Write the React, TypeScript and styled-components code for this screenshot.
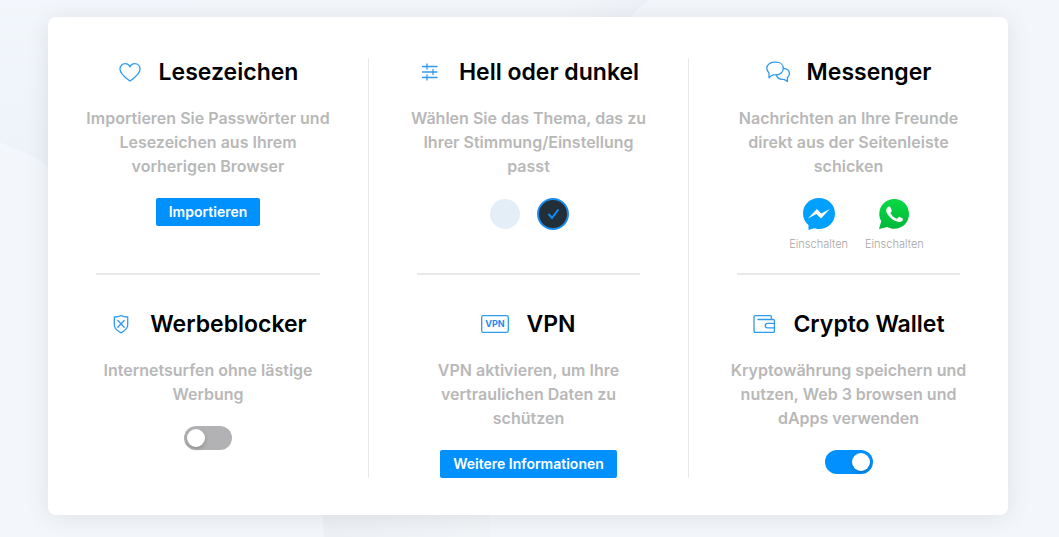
import React from "react";
import styled, { createGlobalStyle } from "styled-components";

const GlobalStyle = createGlobalStyle`
  * { box-sizing: border-box; }
  body {
    margin: 0;
    background: #f3f7fb;
    font-family: Inter, "Liberation Sans", sans-serif;
    color: #000;
  }
`;

const Page = styled.main`
  position: relative;
  min-height: 100vh;
  padding: 17px 51px 22px 48px;
  overflow: hidden;
`;

const Backdrop = styled.svg`
  position: absolute;
  inset: 0;
  width: 100%;
  height: 100%;
`;

const Card = styled.section`
  position: relative;
  display: grid;
  grid-template-columns: repeat(3, 1fr);
  max-width: 960px;
  margin: 0 auto;
  padding: 41px 0 37px;
  border-radius: 8px;
  background: #fff;
  box-shadow: 0 2px 24px rgba(0, 0, 0, 0.09);
`;

const Column = styled.div`
  display: flex;
  flex-direction: column;
  & + & { border-left: 1px solid #e9e9e9; }
`;

const Feature = styled.article`
  display: flex;
  flex-direction: column;
  align-items: center;
  gap: 20px;
  min-height: 168px;
`;

const Divider = styled.hr`
  width: calc(100% - 96px);
  height: 2px;
  margin: 0 auto 35px;
  border: 0;
  background: #e9e9e9;
`;

const Upper = styled.div`
  min-height: 215px;
`;

const Title = styled.h2`
  display: flex;
  align-items: center;
  gap: 17px;
  margin: 0;
  font-size: 23px;
  line-height: 28px;
  font-weight: 600;
  white-space: nowrap;
`;

const Icon = styled.svg`
  flex: none;
  fill: none;
  stroke: #2f9bf0;
  stroke-width: 1.3;
  stroke-linecap: round;
  stroke-linejoin: round;
`;

const IconText = styled.text`
  fill: #1a8cf0;
  stroke: none;
  font-size: 9px;
  font-weight: 700;
  text-anchor: middle;
`;

const Description = styled.p`
  margin: 0;
  color: #b8b8b8;
  font-size: 16px;
  line-height: 24px;
  font-weight: 600;
  text-align: center;
  white-space: pre-line;
`;

const Button = styled.button`
  height: 28px;
  padding: 0 13px;
  border: 0;
  border-radius: 2px;
  background: #0091ff;
  color: #fff;
  font: 600 14px/28px Inter, "Liberation Sans", sans-serif;
  cursor: pointer;
`;

const Themes = styled.div`
  display: flex;
  gap: 16px;
`;

const ThemeChoice = styled.label`
  position: relative;
  display: grid;
  place-items: center;
  width: 32px;
  height: 32px;
`;

const ThemeRadio = styled.input<{ $color: string }>`
  appearance: none;
  width: 30px;
  height: 30px;
  margin: 0;
  border-radius: 50%;
  background: ${(p) => p.$color};
  cursor: pointer;
  &:checked { width: 32px; height: 32px; border: 2px solid #1a8cf0; }
  & + svg { display: none; }
  &:checked + svg { display: block; }
`;

const Check = styled.svg`
  position: absolute;
  inset: 0;
  fill: none;
  stroke: #0d8cf5;
  stroke-width: 2;
  stroke-linecap: round;
  pointer-events: none;
`;

const Messengers = styled.div`
  display: flex;
  gap: 17px;
  padding-left: 16px;
`;

const Messenger = styled.button`
  display: flex;
  flex-direction: column;
  align-items: center;
  gap: 6px;
  padding: 0;
  border: 0;
  background: none;
  color: #a6a6a6;
  font: 300 11px/16px Inter, "Liberation Sans", sans-serif;
  cursor: pointer;
`;

const Switch = styled.input`
  appearance: none;
  display: flex;
  align-items: center;
  width: 48px;
  height: 24px;
  margin: 0;
  padding: 0 3px;
  border-radius: 12px;
  background: #b2b2b4;
  cursor: pointer;
  &::before {
    content: "";
    width: 18px;
    height: 18px;
    border-radius: 50%;
    background: #fff;
    box-shadow: 0 2px 4px rgba(0, 0, 0, 0.2);
  }
  &:checked { justify-content: flex-end; background: #0091ff; }
`;

const HeartIcon = () => (
  <Icon width="24" height="24" viewBox="0 0 24 24" aria-hidden="true">
    <path d="M12 21C8 18 2 14 2 9.2C2 6 4.200 3.600 7.200 3.600C9.500 3.600 11.200 4.900 12 6.900C12.800 4.900 14.500 3.600 16.800 3.600C19.800 3.600 22 6 22 9.200C22 14 16 18 12 21Z" />
  </Icon>
);

const SlidersIcon = () => (
  <Icon width="24" height="24" viewBox="0 0 24 24" aria-hidden="true">
    <path d="M4.500 6.500H19M4.500 12H19M4.500 17.500H19M9 4V9M15 9.500V14.500M9 15V20" />
  </Icon>
);

const ChatIcon = () => (
  <Icon width="24" height="24" viewBox="0 0 24 24" aria-hidden="true">
    <path d="M3 17.800V12.900C1.500 11.600 .8 10 .8 8.300C.8 4.700 4 2.200 8.300 2.200H10C14.300 2.200 17.300 4.700 17.300 8.300C17.300 12 14.200 14.900 10 14.900H7.200C6 15.200 4.600 16.300 3 17.800Z" />
    <path d="M17.300 8.300C21 8.500 23.400 10.700 23.400 13.500C23.400 15.200 22.600 16.600 21.400 17.600V21.500C20 20.400 19 19.500 17.500 19.300H16C13.500 19.300 11.800 18 11 16.600L10.600 15" />
  </Icon>
);

const ShieldIcon = () => (
  <Icon width="24" height="24" viewBox="0 0 24 24" aria-hidden="true">
    <path d="M12 3.500C14 4.800 16.500 5 18.700 5V13C18.700 17 15.500 19 12 20.800C8.500 19 5.300 17 5.300 13V5C7.500 5 10 4.800 12 3.500Z" />
    <path d="M8.800 8.500L15.200 15.200M15.200 8.500L8.800 15.200" />
  </Icon>
);

const VpnIcon = () => (
  <Icon width="28" height="20" viewBox="0 0 28 20" aria-hidden="true">
    <rect x="0.700" y="1.700" width="26.600" height="16.600" rx="1.500" />
    <IconText x="14" y="13">VPN</IconText>
  </Icon>
);

const WalletIcon = () => (
  <Icon width="24" height="24" viewBox="0 0 24 24" aria-hidden="true">
    <path d="M6 7.500H21.200Q22.400 7.500 22.400 8.700V19.200Q22.400 20.400 21.200 20.400H3.600Q2 20.400 2 18.800V5Q2 3.600 3.400 3.600H18.200Q19.400 3.600 19.400 4.800V7.500" />
    <path d="M22.400 11.300H15.500Q13.300 11.300 13.300 13.600Q13.300 15.900 15.500 15.900H22.400" />
  </Icon>
);

const MessengerLogo = () => (
  <svg width="32" height="32" viewBox="0 0 32 32" aria-hidden="true">
    <path fill="#00a0ff" d="M16 0C25 0 32 6.700 32 15.500C32 24.300 25 31 16 31C14 31 12.500 30.800 11 30.200L5.500 32V27C2 24.200 0 20.200 0 15.500C0 6.700 7 0 16 0Z" />
    <path fill="#fff" d="M5 20.500L13.800 11L18.300 15.600L26.800 11L18 20.500L13.400 15.900Z" />
  </svg>
);

const WhatsAppLogo = () => (
  <svg width="32" height="32" viewBox="0 0 32 32" aria-hidden="true">
    <defs>
      <linearGradient id="wa" x2="0" y2="1">
        <stop stopColor="#08d943" />
        <stop offset="1" stopColor="#00b83a" />
      </linearGradient>
    </defs>
    <path fill="url(#wa)" d="M16.300 1C24.700 1 31 7.600 31 16C31 24.400 24.700 30.700 16.300 30.700C13.600 30.700 11.200 30 9.200 28.900L1 31L3.200 23.200C2 21 1.300 18.600 1.300 16C1.300 7.600 8 1 16.300 1Z" />
    <path fill="#fff" d="M10.300 8.800C11 8.200 12 8.300 12.400 9.200L13.800 12.400C14.100 13.200 12.300 14.600 12.500 15.200C14 17.900 16.100 19.700 18.800 20.700C19.500 20.900 20.700 18.500 21.400 18.700L24.700 20.400C25.300 20.800 24.900 22.300 24.200 23C22.700 24.200 20.800 24.300 18.800 23.600C14.400 22.100 11.300 19.300 9 15.600C7.500 13 8 10.400 10.300 8.800Z" />
  </svg>
);

export default function App() {
  return (
    <>
      <GlobalStyle />
      <Page>
        <Backdrop viewBox="0 0 1059 537" preserveAspectRatio="none" aria-hidden="true">
          <defs>
            <linearGradient id="slope" x2="0" y2="1">
              <stop stopColor="#f3f7fc" />
              <stop offset="1" stopColor="#edf2f8" />
            </linearGradient>
            <linearGradient id="fold">
              <stop offset="0.800" stopColor="#f3f7fb" />
              <stop offset="1" stopColor="#edf1f7" />
            </linearGradient>
            <linearGradient id="patch">
              <stop stopColor="#edf1f5" />
              <stop offset="1" stopColor="#f1f5f8" />
            </linearGradient>
          </defs>
          <path fill="url(#slope)" d="M0 0H200V180H56C44 155 20 152 0 142Z" />
          <path fill="url(#fold)" d="M200 0H650C640 6 632 14 622 26H200Z" />
          <path fill="url(#patch)" d="M322 510H490V537H324Z" />
        </Backdrop>
        <Card>
          <Column>
            <Upper>
              <Feature>
                <Title><HeartIcon />Lesezeichen</Title>
                <Description>{"Importieren Sie Passwörter und\nLesezeichen aus Ihrem\nvorherigen Browser"}</Description>
                <Button type="button">Importieren</Button>
              </Feature>
            </Upper>
            <Divider />
            <Feature>
              <Title><ShieldIcon />Werbeblocker</Title>
              <Description>{"Internetsurfen ohne lästige\nWerbung"}</Description>
              <Switch type="checkbox" role="switch" aria-label="Werbeblocker" />
            </Feature>
          </Column>
          <Column>
            <Upper>
              <Feature>
                <Title><SlidersIcon />Hell oder dunkel</Title>
                <Description>{"Wählen Sie das Thema, das zu\nIhrer Stimmung/Einstellung\npasst"}</Description>
                <Themes role="radiogroup" aria-label="Thema">
                  <ThemeChoice>
                    <ThemeRadio type="radio" name="theme" aria-label="Hell" $color="#e4eef7" />
                    <Check width="32" height="32"><path d="M12 16.500L15 20L21 12" /></Check>
                  </ThemeChoice>
                  <ThemeChoice>
                    <ThemeRadio type="radio" name="theme" aria-label="Dunkel" $color="#232f38" defaultChecked />
                    <Check width="32" height="32"><path d="M12 16.500L15 20L21 12" /></Check>
                  </ThemeChoice>
                </Themes>
              </Feature>
            </Upper>
            <Divider />
            <Feature>
              <Title><VpnIcon />VPN</Title>
              <Description>{"VPN aktivieren, um Ihre\nvertraulichen Daten zu\nschützen"}</Description>
              <Button type="button">Weitere Informationen</Button>
            </Feature>
          </Column>
          <Column>
            <Upper>
              <Feature>
                <Title><ChatIcon />Messenger</Title>
                <Description>{"Nachrichten an Ihre Freunde\ndirekt aus der Seitenleiste\nschicken"}</Description>
                <Messengers>
                  <Messenger type="button"><MessengerLogo />Einschalten</Messenger>
                  <Messenger type="button"><WhatsAppLogo />Einschalten</Messenger>
                </Messengers>
              </Feature>
            </Upper>
            <Divider />
            <Feature>
              <Title><WalletIcon />Crypto Wallet</Title>
              <Description>{"Kryptowährung speichern und\nnutzen, Web 3 browsen und\ndApps verwenden"}</Description>
              <Switch type="checkbox" role="switch" aria-label="Crypto Wallet" defaultChecked />
            </Feature>
          </Column>
        </Card>
      </Page>
    </>
  );
}
